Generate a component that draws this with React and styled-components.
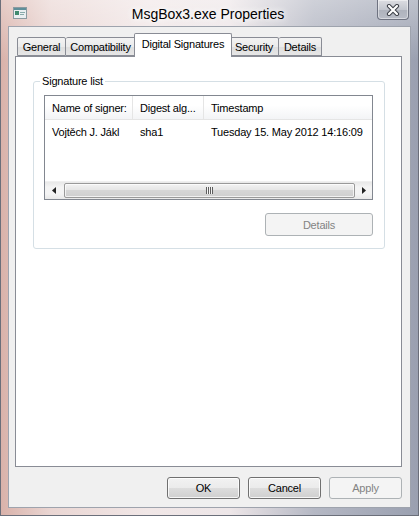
import React from 'react';
import styled, { createGlobalStyle } from 'styled-components';

const Global = createGlobalStyle`
  html, body { margin: 0; padding: 0; background: #fff; }
  body { font-family: "Liberation Sans", Arial, sans-serif; font-size: 11px; letter-spacing: -0.2px; color: #000; }
`;

const Window = styled.div`
  width: 419px;
  height: 516px;
  box-sizing: border-box;
  display: flex;
  flex-direction: column;
  padding: 0 7px 7px 7px;
  border: 1px solid #6b6f7a;
  border-top: none;
  background:
    linear-gradient(180deg, rgba(255,255,255,0.35) 0%, rgba(255,255,255,0) 60px),
    linear-gradient(90deg, #d9b2aa 0%, #ead6d3 12%, #f1e7e7 35%, #ede6e8 55%, #b5b8c4 75%, #9aa0b0 100%);
  overflow: hidden;
`;

const TitleBar = styled.div`
  height: 30px;
  display: flex;
  align-items: center;
  position: relative;
`;

const AppIcon = styled.svg`
  width: 14px;
  height: 12px;
  margin: 0 0 1px 5px;
`;

const Title = styled.div`
  flex: 1;
  text-align: center;
  font-size: 14px;
  letter-spacing: 0;
  margin-right: 22px;
  margin-top: 2px;
  text-shadow: 0 0 6px #fff, 0 0 10px #fff;
`;

const CloseButton = styled.div`
  position: absolute;
  top: 0;
  right: 2px;
  width: 32px;
  height: 20px;
  box-sizing: border-box;
  border: 1px solid #6e7280;
  border-top: none;
  border-radius: 0 0 4px 4px;
  background: linear-gradient(180deg, #dcdde2 0%, #c3c6ce 50%, #aeb2bc 51%, #b8bcc6 100%);
  box-shadow: inset 0 0 0 1px rgba(255,255,255,0.45);
  display: flex;
  align-items: center;
  justify-content: center;
`;

const Client = styled.div`
  flex: 1;
  display: flex;
  flex-direction: column;
  background: #f0f0f0;
  border: 1px solid #9ea3ad;
  padding: 7px 8px 8px 6px;
`;

const TabStrip = styled.div`
  display: flex;
  align-items: flex-end;
  height: 23px;
  padding-left: 2px;
  position: relative;
  z-index: 1;
  margin-bottom: -1px;
`;

const Tab = styled.div`
  box-sizing: border-box;
  width: ${(p) => p.w}px;
  height: ${(p) => (p.active ? '24px' : '19px')};
  margin: ${(p) => (p.active ? '0 -2px' : '0 0 1px 0')};
  padding-top: ${(p) => (p.active ? '3px' : '2px')};
  border: 1px solid #898c95;
  border-bottom: ${(p) => (p.active ? 'none' : '1px solid #898c95')};
  border-left-width: ${(p) => (p.first || p.active ? '1px' : '0')};
  border-radius: 2px 2px 0 0;
  background: ${(p) => (p.active ? '#fff' : 'linear-gradient(180deg, #f3f3f3 0%, #ebebeb 50%, #dedede 51%, #e6e6e6 100%)')};
  text-align: center;
  white-space: nowrap;
  position: relative;
  z-index: ${(p) => (p.active ? 2 : 1)};
  line-height: 14px;
`;

const Panel = styled.div`
  height: 411px;
  box-sizing: border-box;
  border: 1px solid #898c95;
  background: #fff;
  padding: 18px 16px 0 17px;
`;

const Group = styled.fieldset`
  margin: 0;
  border: 1px solid #d5dfe5;
  border-radius: 3px;
  padding: 7px 11px 12px 10px;
  display: flex;
  flex-direction: column;
`;

const Legend = styled.legend`
  padding: 0 2px;
  margin-left: -4px;
  line-height: 13px;
`;

const ListView = styled.div`
  height: 105px;
  box-sizing: border-box;
  border: 1px solid #828790;
  display: flex;
  flex-direction: column;
  background: #fff;
`;

const Columns = styled.div`
  display: grid;
  grid-template-columns: 88px 71px 1fr;
`;

const HeaderRow = styled(Columns)`
  height: 23px;
  border-bottom: 1px solid #e5e5e5;
  background: linear-gradient(180deg, #ffffff 0%, #ffffff 40%, #f3f4f6 100%);
`;

const HeaderCell = styled.div`
  padding: 6px 0 0 7px;
  border-right: ${(p) => (p.last ? 'none' : '1px solid #e5e5e5')};
  white-space: nowrap;
  overflow: hidden;
`;

const Cell = styled.div`
  padding: 6px 0 0 7px;
  white-space: nowrap;
`;

const Spacer = styled.div`
  flex: 1;
`;

const HScroll = styled.div`
  height: 17px;
  display: grid;
  grid-template-columns: 17px 1fr 17px;
  background: linear-gradient(180deg, #e8e8e8 0%, #f4f4f4 30%, #f4f4f4 70%, #e8e8e8 100%);
  border-top: 1px solid #f0f0f0;
`;

const Arrow = styled.div`
  display: flex;
  align-items: center;
  justify-content: center;
`;

const Track = styled.div`
  padding: 1px 0 1px 2px;
  display: flex;
`;

const Thumb = styled.div`
  width: ${(p) => p.size}px;
  box-sizing: border-box;
  border: 1px solid #9a9a9a;
  border-radius: 2px;
  background: linear-gradient(180deg, #f3f3f3 0%, #e6e6e6 45%, #d6d6d6 50%, #cfcfcf 100%);
  box-shadow: inset 0 0 0 1px rgba(255,255,255,0.7);
  display: flex;
  align-items: center;
  justify-content: center;
`;

const Grip = styled.div`
  width: 7px;
  height: 7px;
  background: repeating-linear-gradient(90deg, #5d5d5d 0 1px, #f4f4f4 1px 2px);
`;

const Button = styled.button`
  width: ${(p) => p.w || 73}px;
  height: ${(p) => p.h || 22}px;
  box-sizing: border-box;
  border: 1px solid ${(p) => (p.disabled ? '#adb2b5' : '#707070')};
  border-radius: 3px;
  background: ${(p) => (p.disabled ? '#f4f4f4' : 'linear-gradient(180deg, #f2f2f2 0%, #ebebeb 50%, #dddddd 51%, #cfcfcf 100%)')};
  box-shadow: inset 0 0 0 1px ${(p) => (p.disabled ? 'rgba(255,255,255,0)' : 'rgba(255,255,255,0.8)')};
  color: ${(p) => (p.disabled ? '#838383' : '#000')};
  font-family: "Liberation Sans", Arial, sans-serif;
  font-size: 11px;
  letter-spacing: -0.2px;
  padding: 0;
`;

const DetailsRow = styled.div`
  display: flex;
  justify-content: flex-end;
  margin-top: 13px;
`;

const ButtonBar = styled.div`
  display: flex;
  justify-content: flex-end;
  gap: 8px;
  margin-top: 10px;
`;

const tabs = [
  { label: 'General', w: 49 },
  { label: 'Compatibility', w: 70 },
  { label: 'Digital Signatures', w: 98, active: true },
  { label: 'Security', w: 49 },
  { label: 'Details', w: 43 },
];

export default function App() {
  return (
    <Window>
      <Global />
      <TitleBar>
        <AppIcon viewBox="0 0 14 12">
          <rect x="0.5" y="0.5" width="13" height="11" fill="#e9eef0" stroke="#8a9aa0" />
          <rect x="1" y="1" width="12" height="2" fill="#5f8f9a" />
          <rect x="2" y="4" width="4" height="4" fill="#3f8a6e" />
          <rect x="7" y="5" width="5" height="1" fill="#8aa" />
          <rect x="7" y="7" width="4" height="1" fill="#8aa" />
        </AppIcon>
        <Title>MsgBox3.exe Properties</Title>
        <CloseButton>
          <svg width="14" height="12" viewBox="0 0 14 12">
            <path d="M3 2 L11 10 M11 2 L3 10" stroke="#3c3f48" strokeWidth="4.2" strokeLinecap="round" />
            <path d="M3 2 L11 10 M11 2 L3 10" stroke="#ffffff" strokeWidth="2.2" strokeLinecap="round" />
          </svg>
        </CloseButton>
      </TitleBar>
      <Client>
        <TabStrip>
          {tabs.map((t, i) => (
            <Tab key={t.label} w={t.w} first={i === 0} active={t.active}>
              {t.label}
            </Tab>
          ))}
        </TabStrip>
        <Panel>
          <Group>
            <Legend>Signature list</Legend>
            <ListView>
              <HeaderRow>
                <HeaderCell>Name of signer:</HeaderCell>
                <HeaderCell>Digest alg...</HeaderCell>
                <HeaderCell last>Timestamp</HeaderCell>
              </HeaderRow>
              <Columns>
                <Cell>Vojtěch J. Jákl</Cell>
                <Cell>sha1</Cell>
                <Cell>Tuesday 15. May 2012 14:16:09</Cell>
              </Columns>
              <Spacer />
              <HScroll>
                <Arrow>
                  <svg width="4" height="7" viewBox="0 0 4 7"><path d="M4 0 L0 3.5 L4 7 Z" fill="#222" /></svg>
                </Arrow>
                <Track>
                  <Thumb size={291}>
                    <Grip />
                  </Thumb>
                </Track>
                <Arrow>
                  <svg width="4" height="7" viewBox="0 0 4 7"><path d="M0 0 L4 3.5 L0 7 Z" fill="#222" /></svg>
                </Arrow>
              </HScroll>
            </ListView>
            <DetailsRow>
              <Button disabled w={108} h={23}>Details</Button>
            </DetailsRow>
          </Group>
        </Panel>
        <ButtonBar>
          <Button>OK</Button>
          <Button>Cancel</Button>
          <Button disabled>Apply</Button>
        </ButtonBar>
      </Client>
    </Window>
  );
}
